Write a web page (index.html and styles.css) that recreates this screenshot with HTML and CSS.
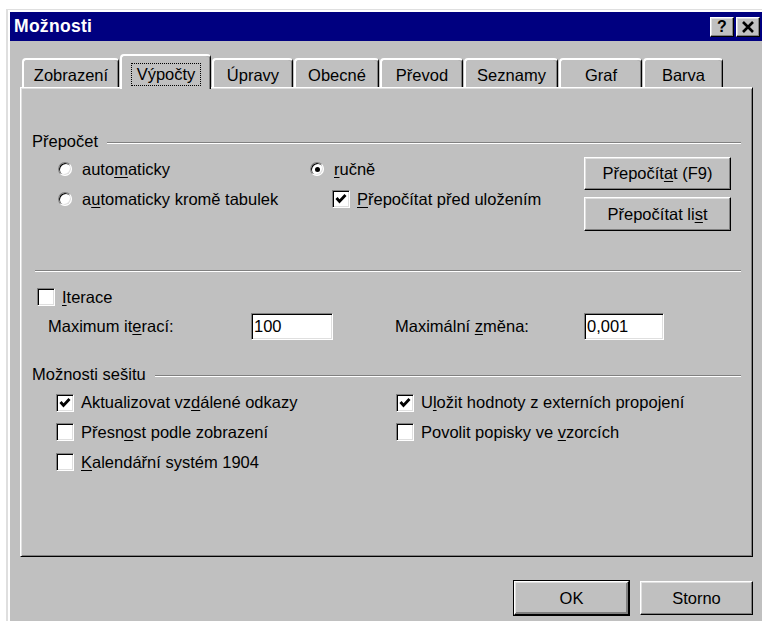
FILE: index.html
```html
<!DOCTYPE html>
<html lang="cs">
<head>
<meta charset="utf-8">
<title>Možnosti</title>
<link rel="stylesheet" href="styles.css">
</head>
<body>
<div class="window">
  <div class="frame">
    <div class="titlebar">
      <span class="title">Možnosti</span>
      <div class="caption-buttons">
        <span class="cap-btn help">?</span>
        <span class="cap-btn close">
          <svg width="14" height="12" viewBox="0 0 14 12"><path d="M2 1 L12 11 M12 1 L2 11" stroke="#000" stroke-width="2.6" fill="none"/></svg>
        </span>
      </div>
    </div>

    <div class="tabs">
      <div class="tab t1">Zobrazení</div>
      <div class="tab t2 active"><span class="focus">Výpočty</span></div>
      <div class="tab t3">Úpravy</div>
      <div class="tab t4">Obecné</div>
      <div class="tab t5">Převod</div>
      <div class="tab t6">Seznamy</div>
      <div class="tab t7">Graf</div>
      <div class="tab t8">Barva</div>
    </div>

    <div class="panel">
      <div class="group-head head-calc"><span>Přepočet</span><i class="etch"></i></div>
      <div class="calc">
        <div class="col col-a">
          <div class="row"><span class="radio"></span><span>auto<u>m</u>aticky</span></div>
          <div class="row"><span class="radio"></span><span>a<u>u</u>tomaticky kromě tabulek</span></div>
        </div>
        <div class="col col-b">
          <div class="row"><span class="radio on"></span><span><u>r</u>učně</span></div>
          <div class="row sub">
            <span class="check on"><svg width="14" height="14" viewBox="0 0 14 14"><path d="M2.5 6 L5.5 9.5 L11.5 3" stroke="#000" stroke-width="2.8" fill="none"/></svg></span>
            <span><u>P</u>řepočítat před uložením</span>
          </div>
        </div>
        <div class="col col-c">
          <button class="btn calc-btn">Přepočít<u>a</u>t (F9)</button>
          <button class="btn calc-btn second">Přepočítat li<u>s</u>t</button>
        </div>
      </div>

      <div class="etch rule"></div>

      <div class="row iter"><span class="check"></span><span><u>I</u>terace</span></div>
      <div class="limits">
        <span class="lbl lbl-a">Maximum it<u>e</u>rací:</span>
        <input class="field field-a" type="text" value="100" readonly>
        <span class="lbl lbl-b">Maximální <u>z</u>měna:</span>
        <input class="field field-b" type="text" value="0,001" readonly>
      </div>

      <div class="group-head head-book"><span>Možnosti sešitu</span><i class="etch"></i></div>
      <div class="book">
        <div class="row r1">
          <span class="check on"><svg width="14" height="14" viewBox="0 0 14 14"><path d="M2.5 6 L5.5 9.5 L11.5 3" stroke="#000" stroke-width="2.8" fill="none"/></svg></span>
          <span>Aktualizovat vz<u>d</u>álené odkazy</span>
        </div>
        <div class="row r1">
          <span class="check on"><svg width="14" height="14" viewBox="0 0 14 14"><path d="M2.5 6 L5.5 9.5 L11.5 3" stroke="#000" stroke-width="2.8" fill="none"/></svg></span>
          <span>U<u>l</u>ožit hodnoty z externích propojení</span>
        </div>
        <div class="row"><span class="check"></span><span>Přesn<u>o</u>st podle zobrazení</span></div>
        <div class="row"><span class="check"></span><span>Povolit popisky ve <u>v</u>zorcích</span></div>
        <div class="row"><span class="check"></span><span><u>K</u>alendářní systém 1904</span></div>
      </div>
    </div>

    <div class="actions">
      <button class="btn default">OK</button>
      <button class="btn">Storno</button>
    </div>
  </div>
</div>
</body>
</html>
```

FILE: styles.css
```css
* { box-sizing: border-box; }

html, body {
  margin: 0;
  padding: 0;
}

body {
  width: 762px;
  height: 621px;
  overflow: hidden;
  background: #fff;
  font-family: "Liberation Sans", Arial, sans-serif;
  font-size: 16.5px;
  color: #000;
}

u { text-decoration: underline; text-underline-offset: 2px; }

/* window frame */
.window {
  margin: 9px 0 0 6px;
  width: 762px;
  height: 640px;
  background: #c0c0c0;
  border-top: 1px solid #dfdfdf;
  border-left: 2px solid #dfdfdf;
}

.frame {
  height: 100%;
  border-top: 2px solid #fff;
  border-left: 2px solid #fff;
}

/* caption */
.titlebar {
  height: 29px;
  background: #000080;
  display: flex;
  align-items: center;
  justify-content: space-between;
  padding: 0 8px 0 4px;
}

.title {
  color: #fff;
  font-weight: bold;
  font-size: 17.5px;
  letter-spacing: 0.3px;
}

.caption-buttons {
  display: flex;
  gap: 2px;
  padding-top: 1px;
}

.cap-btn {
  width: 24px;
  height: 20px;
  background: #c0c0c0;
  border-top: 1px solid #fff;
  border-left: 1px solid #fff;
  border-right: 1px solid #000;
  border-bottom: 1px solid #000;
  box-shadow: inset -1px -1px 0 #808080, inset 1px 1px 0 #dfdfdf;
  display: flex;
  align-items: center;
  justify-content: center;
}

.help {
  font-weight: bold;
  font-size: 16px;
  line-height: 1;
}

/* tab strip */
.tabs {
  display: flex;
  align-items: flex-end;
  height: 46px;
  padding-left: 12px;
}

.tab {
  position: relative;
  height: 29px;
  margin-right: 1px;
  padding-top: 3px;
  display: flex;
  align-items: center;
  justify-content: center;
  background: #c0c0c0;
  border-top: 2px solid #fff;
  border-left: 2px solid #fff;
  border-right: 1px solid #000;
  border-radius: 4px 4px 0 0;
  box-shadow: inset -1px 0 0 #808080;
}

.t1 { width: 97px; }
.t2 { width: 91px; }
.t3 { width: 81px; }
.t4 { width: 85px; }
.t5 { width: 83px; }
.t6 { width: 94px; }
.t7 { width: 83px; }
.t8 { width: 80px; }

.tab.active {
  height: 35px;
  margin-bottom: -2px;
  z-index: 2;
}

.focus {
  border: 1px dotted #000;
  padding: 1px 5px;
  line-height: 19px;
}

/* property page */
.panel {
  margin-left: 10px;
  width: 733px;
  height: 470px;
  padding: 0 11px;
  border-top: 1px solid #fff;
  border-left: 1px solid #fff;
  border-right: 1px solid #000;
  border-bottom: 1px solid #000;
  box-shadow: inset 1px 1px 0 #dfdfdf, inset -1px -1px 0 #808080;
}

.etch {
  display: block;
  height: 2px;
  border-top: 1px solid #808080;
  border-bottom: 1px solid #fff;
}

.group-head {
  display: flex;
  align-items: flex-start;
  line-height: 20px;
  height: 20px;
}

.group-head .etch {
  flex: 1;
  margin-left: 9px;
  margin-top: 11px;
}

.head-calc { margin-top: 43px; }
.head-book { margin-top: 24px; }

.row {
  display: flex;
  align-items: center;
  height: 30px;
  white-space: nowrap;
}

.radio {
  width: 14px;
  height: 14px;
  margin-right: 10px;
  flex: none;
  border-radius: 50%;
  background: #fff;
  border: 1px solid;
  border-color: #808080 #fff #fff #808080;
  box-shadow: inset 1px 1px 0 #000, inset -1px -1px 0 #dfdfdf;
  display: flex;
  align-items: center;
  justify-content: center;
}

.radio.on::after {
  content: "";
  width: 5px;
  height: 5px;
  border-radius: 50%;
  background: #000;
}

.check {
  width: 18px;
  height: 18px;
  margin-right: 7px;
  flex: none;
  background: #fff;
  border: 1px solid;
  border-color: #808080 #fff #fff #808080;
  box-shadow: inset 1px 1px 0 #000, inset -1px -1px 0 #dfdfdf;
  display: flex;
  align-items: center;
  justify-content: center;
}

.check svg { display: block; }

/* calculation section */
.calc {
  display: flex;
  height: 80px;
}

.col-a {
  margin-left: 26px;
  width: 252px;
  padding-top: 3px;
}

.col-b {
  width: 274px;
  padding-top: 3px;
}

.col-b .sub { padding-left: 22px; }

.col-c {
  width: 147px;
  padding-top: 6px;
  display: flex;
  flex-direction: column;
  gap: 7px;
}

.btn {
  font: inherit;
  color: #000;
  background: #c0c0c0;
  height: 34px;
  padding: 0;
  border-top: 1px solid #fff;
  border-left: 1px solid #fff;
  border-right: 1px solid #000;
  border-bottom: 1px solid #000;
  box-shadow: inset -1px -1px 0 #808080, inset 1px 1px 0 #dfdfdf;
}

.calc-btn { width: 147px; height: 33px; }
.calc-btn.second { height: 34px; }

.rule {
  margin: 39px 0 0 3px;
}

.iter {
  margin-top: 10px;
  padding-left: 5px;
}

.limits {
  margin-top: 1px;
  height: 27px;
  display: flex;
  align-items: center;
}

.lbl { white-space: nowrap; }
.lbl-a { margin-left: 16px; width: 203px; }
.lbl-b { margin-left: 62px; width: 189px; }

.field {
  font: inherit;
  color: #000;
  height: 27px;
  padding: 0 0 0 2px;
  background: #fff;
  border: 1px solid;
  border-color: #808080 #fff #fff #808080;
  box-shadow: inset 1px 1px 0 #000, inset -1px -1px 0 #dfdfdf;
  outline: none;
}

.field-a { width: 82px; }
.field-b { width: 80px; }

/* workbook options */
.book {
  margin: 3px 0 0 24px;
  display: grid;
  grid-template-columns: 340px 340px;
  grid-auto-rows: 30px;
}

.book .r1 { height: 31px; }

/* dialog buttons */
.actions {
  margin: 24px 0 0 10px;
  width: 733px;
  display: flex;
  justify-content: flex-end;
  gap: 11px;
}

.actions .btn {
  width: 113px;
  height: 34px;
}

.actions .btn.default {
  width: 115px;
  outline: 1px solid #000;
  outline-offset: 0;
  border-right: 1px solid #000;
  border-bottom: 1px solid #000;
  box-shadow: inset -1px -1px 0 #808080, inset 1px 1px 0 #dfdfdf, inset -2px -2px 0 #808080;
}
```
